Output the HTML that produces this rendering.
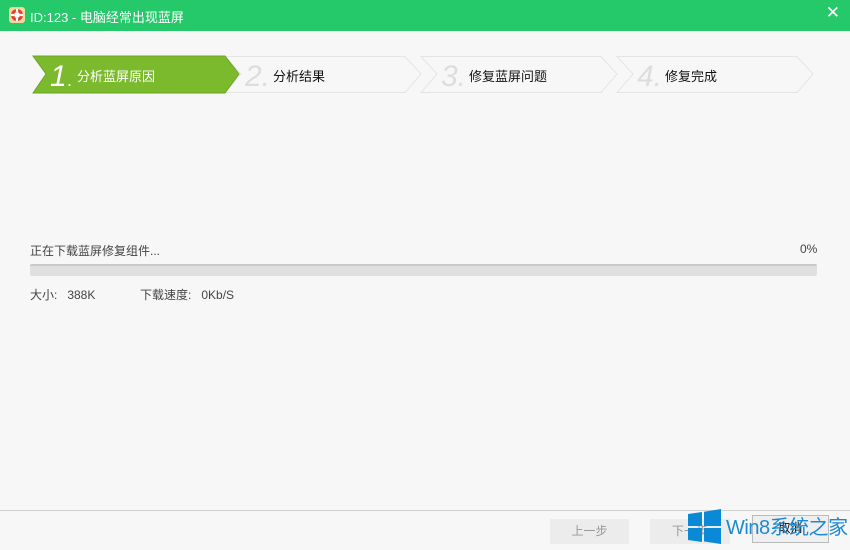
<!DOCTYPE html>
<html><head><meta charset="utf-8"><style>
*{margin:0;padding:0;box-sizing:border-box}
body{width:850px;height:550px;background:#f7f7f7;font-family:"Liberation Sans","Noto Sans CJK SC",sans-serif;position:relative;overflow:hidden;font-size:12px;color:#333}
.title{position:absolute;left:0;top:0;width:850px;height:31px;background:#25c96a;color:#fff;font-size:13px}
.title span{position:absolute;left:30px;top:7px}
.close{position:absolute;right:10px;top:3px;font-size:17px;color:#fff}
.t{position:absolute;white-space:nowrap}
.bar{position:absolute;left:30px;top:264px;width:787px;height:12px;background:#e0e0e0;border-top:2px solid #c8c8c8;border-radius:2px}
.line{position:absolute;left:0;top:510px;width:850px;height:1px;background:#d0d0d0}
.btn{position:absolute;top:519px;height:25px;background:#ececec;color:#999;text-align:center;line-height:25px;font-size:12px}
</style></head><body>
<div class="title">
<svg style="position:absolute;left:9px;top:7px" width="16" height="16" viewBox="0 0 16 16"><rect x="0" y="0" width="16" height="16" rx="3" fill="#f3d9a0"/><circle cx="8" cy="8" r="6" fill="#e53b2c"/><circle cx="8" cy="8" r="3" fill="#fff"/><path d="M8 2v3M8 11v3M2 8h3M11 8h3" stroke="#fff" stroke-width="2.2"/></svg>
<span>ID:123 - 电脑经常出现蓝屏</span><div class="close">✕</div></div>
<svg style="position:absolute;left:0;top:50px" width="850" height="50">
<polygon points="617,6.5 797,6.5 813,24 797,42.5 617,42.5 633,24" fill="#f7f7f7" stroke="#e4e4e4"/>
<polygon points="421,6.5 601,6.5 617,24 601,42.5 421,42.5 437,24" fill="#f7f7f7" stroke="#e4e4e4"/>
<polygon points="225,6.5 405,6.5 421,24 405,42.5 225,42.5 241,24" fill="#f7f7f7" stroke="#e4e4e4"/>
<polygon points="33,6 225,6 239,24 225,43 33,43 46,24" fill="#7aba2c" stroke="#6aa625"/>
<text x="50" y="36" font-family="Liberation Sans" font-size="30" font-style="italic" fill="#fff">1</text><text x="67" y="36" font-size="18" fill="#fff">.</text>
<text x="245" y="36" font-family="Liberation Sans" font-size="30" font-style="italic" fill="#ddd">2.</text>
<text x="441" y="36" font-family="Liberation Sans" font-size="30" font-style="italic" fill="#ddd">3.</text>
<text x="637" y="36" font-family="Liberation Sans" font-size="30" font-style="italic" fill="#ddd">4.</text>
</svg>
<div class="t" style="left:77px;top:66px;font-size:13px;color:#fff">分析蓝屏原因</div>
<div class="t" style="left:273px;top:66px;font-size:13px;color:#111">分析结果</div>
<div class="t" style="left:469px;top:66px;font-size:13px;color:#111">修复蓝屏问题</div>
<div class="t" style="left:665px;top:66px;font-size:13px;color:#111">修复完成</div>
<div class="t" style="left:30px;top:242px;color:#444">正在下载蓝屏修复组件...</div>
<div class="t" style="left:800px;top:242px;color:#444">0%</div>
<div class="bar"></div>
<div class="t" style="left:30px;top:286px;color:#444">大小:&nbsp;&nbsp;&nbsp;388K</div>
<div class="t" style="left:140px;top:286px;color:#444">下载速度:&nbsp;&nbsp;&nbsp;0Kb/S</div>
<div class="line"></div>
<div class="btn" style="left:550px;width:79px">上一步</div>
<div class="btn" style="left:650px;width:80px">下一步</div>
<div class="btn" style="left:752px;width:77px;background:#efefef;border:1px solid #bbb;color:#000;top:515px;height:28px">取消</div>
<svg style="position:absolute;left:688px;top:509px" width="34" height="35" viewBox="0 0 34 35"><path d="M0 5l14-2v14H0zM16 2.7L33 0v17H16zM0 19h14v14L0 31zM16 19h17v16l-17-2.5z" fill="#0a8ad6"/></svg>
<div class="t" style="left:726px;top:511px;font-size:20px;letter-spacing:-0.5px;color:#1a8ad6">Win8系统之家</div>
</body></html>
